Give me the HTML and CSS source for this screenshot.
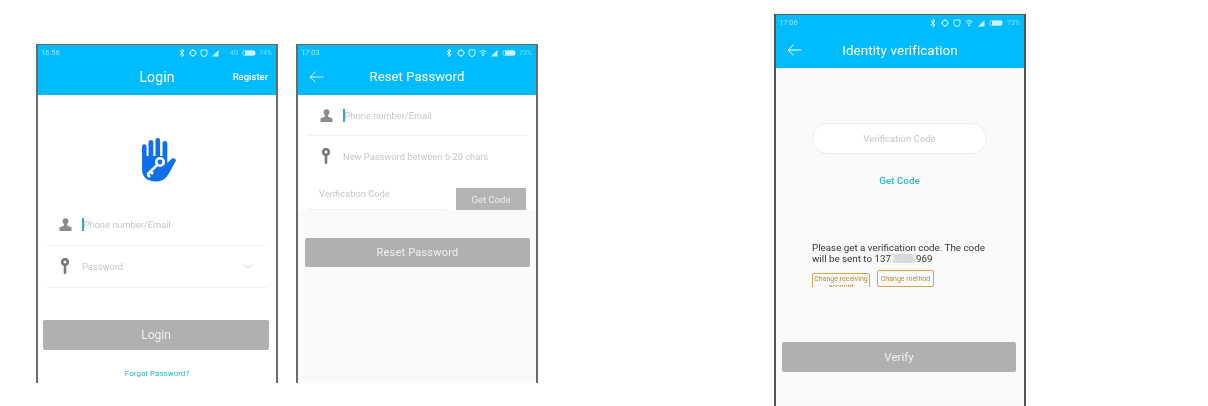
FILE: index.html
```html
<!DOCTYPE html>
<html lang="en">
<head>
<meta charset="utf-8">
<title>Phone screens</title>
<link rel="stylesheet" href="styles.css">
</head>
<body>
<svg class="defs" aria-hidden="true">
  <symbol id="i-bt" viewBox="0 0 8 8"><path d="M2 2l4 4-2 1.6V.4L6 2 2 6" fill="none" stroke="currentColor" stroke-width="1"/></symbol>
  <symbol id="i-clock" viewBox="0 0 8 8"><circle cx="4" cy="4" r="2.8" fill="none" stroke="currentColor" stroke-width="1"/><path d="M4 0v1.5M4 6.5V8M0 4h1.5M6.500 4H8" stroke="currentColor"/></symbol>
  <symbol id="i-alarm" viewBox="0 0 8 8"><path d="M1 1h6v3.500a3 3 0 0 1-6 0z" fill="none" stroke="currentColor" stroke-width="1"/></symbol>
  <symbol id="i-wifi" viewBox="0 0 8 8"><path d="M.5 3a5 5 0 0 1 7 0M2 4.500a3 3 0 0 1 4 0" fill="none" stroke="currentColor"/><circle cx="4" cy="6.300" r="1" fill="currentColor"/></symbol>
  <symbol id="i-signal" viewBox="0 0 8 8"><path d="M1 7.500L7.500 1v6.500z" fill="currentColor"/></symbol>
  <symbol id="i-batt" viewBox="0 0 14 8"><rect x="1" y="1.500" width="12" height="5" rx="1.500" fill="none" stroke="currentColor" stroke-width=".7"/><rect x="3" y="2" width="10" height="4" fill="currentColor"/></symbol>
  <symbol id="i-person" viewBox="0 0 13 13"><circle cx="6.500" cy="3.200" r="2.900" fill="currentColor"/><path d="M5 6h3v1.600l4.500 2V13H.5V9.600L5 7.600z" fill="currentColor"/></symbol>
  <symbol id="i-key" viewBox="0 0 8 17"><path fill-rule="evenodd" d="M4 0a4 4 0 0 1 1.300 7.800V15L4 16.500 2.700 15V7.800A4 4 0 0 1 4 0zm0 2.500a1.500 1.500 0 1 0 0 3 1.500 1.500 0 0 0 0-3z" fill="currentColor"/></symbol>
  <symbol id="i-back" viewBox="0 0 15 12"><path d="M14.500 6H1M6.500.7L1 6l5.500 5.300" fill="none" stroke="currentColor" stroke-width="1"/></symbol>
</svg>

<main class="page">
  <section class="phone phone-login">
    <header class="appbar">
      <div class="status">
        <span class="time">16:56</span>
        <span class="status-icons">
          <svg class="si"><use href="#i-bt"/></svg>
          <svg class="si"><use href="#i-clock"/></svg>
          <svg class="si"><use href="#i-alarm"/></svg>
          <svg class="si si-gap"><use href="#i-signal"/></svg>
          <span class="status-text status-gap">4G</span>
          <svg class="si-batt"><use href="#i-batt"/></svg>
          <span class="status-text">74%</span>
        </span>
      </div>
      <div class="nav">
        <span class="nav-side"></span>
        <h1 class="nav-title">Login</h1>
        <span class="nav-side nav-action">Register</span>
      </div>
    </header>
    <div class="screen screen-white">
      <svg class="logo" viewBox="0 0 36 44" aria-label="Hand with key logo">
        <path d="M1 8.500a2.300 2.300 0 0 1 4.600 0V18H7.500V4.500a2.400 2.400 0 0 1 4.800 0V18H14.500V2.300a2.300 2.300 0 0 1 4.600 0V18H21.500V5.500a2.400 2.400 0 0 1 4.800 0V25l4-4c1.500-1.300 4.500-.5 4.700 1.500-3 5-6 12-9.500 16.500-3 3.500-7 4.700-11.500 4.500C5 43 1 38 1 31z" fill="#0f70e8"/>
        <circle cx="19" cy="24" r="3.700" fill="none" stroke="#fff" stroke-width="2.600"/>
        <path d="M16 27L6.500 36.500M9.500 33.500l2.500 2.500M6.500 36.500l2.500 2.500" stroke="#fff" stroke-width="2.600" fill="none"/>
      </svg>
      <div class="field field-first">
        <svg class="field-icon-person"><use href="#i-person"/></svg>
        <span class="caret"></span>
        <span class="hint">Phone number/Email</span>
      </div>
      <div class="field">
        <svg class="field-icon-key"><use href="#i-key"/></svg>
        <span class="hint hint-pad">Password</span>
        <svg class="chevron" viewBox="0 0 10 5"><path d="M.5 .5L5 4l4.500-3.500" fill="none" stroke="currentColor"/></svg>
      </div>
      <div class="btn btn-login">Login</div>
      <a class="link link-forgot">Forgot Password?</a>
    </div>
  </section>

  <section class="phone phone-reset">
    <header class="appbar">
      <div class="status">
        <span class="time">17:03</span>
        <span class="status-icons">
          <svg class="si"><use href="#i-bt"/></svg>
          <svg class="si"><use href="#i-clock"/></svg>
          <svg class="si"><use href="#i-alarm"/></svg>
          <svg class="si"><use href="#i-wifi"/></svg>
          <svg class="si"><use href="#i-signal"/></svg>
          <svg class="si-batt"><use href="#i-batt"/></svg>
          <span class="status-text">73%</span>
        </span>
      </div>
      <div class="nav">
        <span class="nav-side"><svg class="back"><use href="#i-back"/></svg></span>
        <h1 class="nav-title nav-title-sm">Reset Password</h1>
        <span class="nav-side"></span>
      </div>
    </header>
    <div class="screen screen-grey">
      <div class="reset-fields">
        <div class="field field-reset">
          <svg class="field-icon-person"><use href="#i-person"/></svg>
          <span class="caret"></span>
          <span class="hint">Phone number/Email</span>
        </div>
        <div class="field field-reset field-plain">
          <svg class="field-icon-key"><use href="#i-key"/></svg>
          <span class="hint hint-pad">New Password between 6-20 chars</span>
        </div>
        <div class="code-row">
          <span class="code-input">Verification Code</span>
          <span class="code-btn">Get Code</span>
        </div>
      </div>
      <div class="btn btn-reset">Reset Password</div>
    </div>
  </section>

  <section class="phone phone-verify">
    <header class="appbar appbar-tall">
      <div class="status">
        <span class="time">17:06</span>
        <span class="status-icons status-icons-wide">
          <svg class="si"><use href="#i-bt"/></svg>
          <svg class="si"><use href="#i-clock"/></svg>
          <svg class="si"><use href="#i-alarm"/></svg>
          <svg class="si"><use href="#i-wifi"/></svg>
          <svg class="si"><use href="#i-signal"/></svg>
          <svg class="si-batt"><use href="#i-batt"/></svg>
          <span class="status-text">73%</span>
        </span>
      </div>
      <div class="nav">
        <span class="nav-side"><svg class="back back-bold"><use href="#i-back"/></svg></span>
        <h1 class="nav-title nav-title-lg">Identity verification</h1>
        <span class="nav-side"></span>
      </div>
    </header>
    <div class="screen screen-grey">
      <div class="pill">Verification Code</div>
      <a class="link link-code">Get Code</a>
      <p class="notice">Please get a verification code. The code will be sent to 137<span class="blurred"></span>969</p>
      <div class="change-row">
        <span class="change change-clipped">Change receiving account</span>
        <span class="change">Change method</span>
      </div>
      <div class="btn btn-verify">Verify</div>
    </div>
  </section>
</main>
</body>
</html>
```

FILE: styles.css
```css
* { box-sizing: border-box; }
html, body { margin: 0; padding: 0; background: #fff; }
body { width: 1208px; height: 406px; overflow: hidden; font-family: Roboto, "Liberation Sans", sans-serif; }
.defs { width: 0; height: 0; display: block; }

.page { display: flex; align-items: flex-start; padding-left: 36px; height: 406px; }

.phone { display: flex; flex-direction: column; border: solid #6a6a6a; border-width: 1px 2px 0; filter: blur(.5px); }
.phone-login { width: 242px; height: 339px; margin-top: 44px; }
.phone-reset { width: 242px; height: 339px; margin-top: 44px; margin-left: 18px; }
.phone-verify { width: 252px; height: 392px; margin-top: 14px; margin-left: 236px; border-color: #555; }

.appbar { background: #00bcff; color: #fff; height: 50px; flex: none; }
.appbar-tall { height: 53px; }
.status { display: flex; justify-content: space-between; align-items: center; height: 15px; padding: 0 4px 0 3px; }
.time { font-size: 7.500px; opacity: .6; }
.status-icons { display: flex; align-items: center; gap: 3.300px; color: rgba(255,255,255,.8); }
.status-icons-wide { gap: 4px; }
.si { width: 8px; height: 8px; }
.si-gap { margin-right: 7px; }
.si-batt { width: 14px; height: 8px; }
.status-text { font-size: 7px; opacity: .6; }

.nav { display: flex; align-items: center; height: 33px; padding: 0 8px 0 8px; }
.appbar-tall .nav { height: 38px; padding-top: 2px; }
.nav-side { flex: 1 1 0; display: flex; align-items: center; }
.nav-action { justify-content: flex-end; font-size: 9.500px; font-weight: 500; }
.nav-title { margin: 0; font-size: 14px; font-weight: 400; letter-spacing: .1px; }
.nav-title-sm { font-size: 13px; }
.nav-title-lg { font-size: 13.400px; }
.back { width: 15px; height: 12px; color: rgba(255,255,255,.85); margin-left: 3px; }
.back-bold { color: #fff; margin-left: 3px; }

.screen { flex: 1; display: flex; flex-direction: column; overflow: hidden; }
.screen-white { background: #fff; }
.screen-grey { background: #fafafa; }

.logo { width: 36px; height: 44px; flex: none; margin: 43px 0 0 103px; }

.field { display: flex; align-items: center; height: 42px; margin: 0 9px; border-bottom: 1px solid #f2f2f2; color: #c4c4c4; flex: none; }
.field-first { margin-top: 22px; }
.field-reset { margin-left: 10px; }
.field-plain { border-bottom: 0; }
.field-icon-person { width: 13px; height: 13px; margin-left: 12px; color: #8c8c8c; flex: none; }
.field-icon-key { width: 8px; height: 17px; margin-left: 14px; color: #777; flex: none; }
.caret { width: 1.500px; height: 13px; background: #3aa6c4; margin-left: 10px; flex: none; }
.hint { font-size: 9.300px; color: #c6c6c6; white-space: nowrap; }
.hint-pad { margin-left: 13px; }
.chevron { width: 10px; height: 5px; margin-left: auto; margin-right: 14px; color: #d8d8d8; }

.btn { display: flex; align-items: center; justify-content: center; background: #b0b0b0; color: #f0f0f0; border-radius: 2px; flex: none; }
.btn-login { margin: 32px 0 0 5px; width: 226px; height: 30px; font-size: 12px; }
.btn-reset { margin: 28px 0 0 7px; width: 225px; height: 29px; font-size: 11px; letter-spacing: .2px; }
.btn-verify { margin: 55px 0 0 6px; width: 234px; height: 30px; font-size: 11.500px; }

.link { color: #2cb6c9; font-size: 8px; text-align: center; display: block; }
.link-forgot { margin-top: 19px; }
.link-code { margin-top: 21px; margin-right: 1px; font-size: 9.800px; font-weight: 500; }

.reset-fields { background: #fff; flex: none; }
.reset-fields .field { height: 41px; }
.reset-fields .field-plain { height: 40px; }
.code-row { display: flex; align-items: flex-end; justify-content: space-between; height: 34px; padding: 0 9px 0 9px; }
.code-input { width: 139px; height: 34px; border-bottom: 1px solid #f2f2f2; font-size: 9.300px; color: #c6c6c6; padding: 12px 0 0 12px; }
.code-btn { width: 70px; height: 22px; background: #b4b4b4; color: #ececec; font-size: 9.500px; display: flex; align-items: center; justify-content: center; margin-right: 1px; }

.pill { width: 175px; height: 31px; margin: 55px 0 0 36px; border: 1px solid #ececec; border-radius: 16px; background: #fff; color: #c6c6c6; font-size: 9.500px; display: flex; align-items: center; justify-content: center; flex: none; }

.notice { margin: 56px 0 0 36px; width: 180px; font-size: 9.800px; line-height: 11px; color: #333; }
.blurred { display: inline-block; width: 25px; height: 9px; vertical-align: -1px; background: linear-gradient(90deg, #f6f6f6, #d9d9de 20%, #d6d6dc 80%, #f4f4f4); }

.change-row { display: flex; align-items: flex-start; gap: 7px; height: 17px; margin: 6px 0 0 36px; overflow: hidden; flex: none; }
.change { flex: none; width: 58px; height: 17px; border: 1px solid #d9a650; border-radius: 2px; font-size: 7px; color: #b98a3c; display: flex; align-items: center; justify-content: center; text-align: center; white-space: normal; }
.change + .change { width: 57px; }
.change-clipped { height: 24px; margin-top: 3px; line-height: 8px; padding: 1px 0 0; align-items: flex-start; }
```
